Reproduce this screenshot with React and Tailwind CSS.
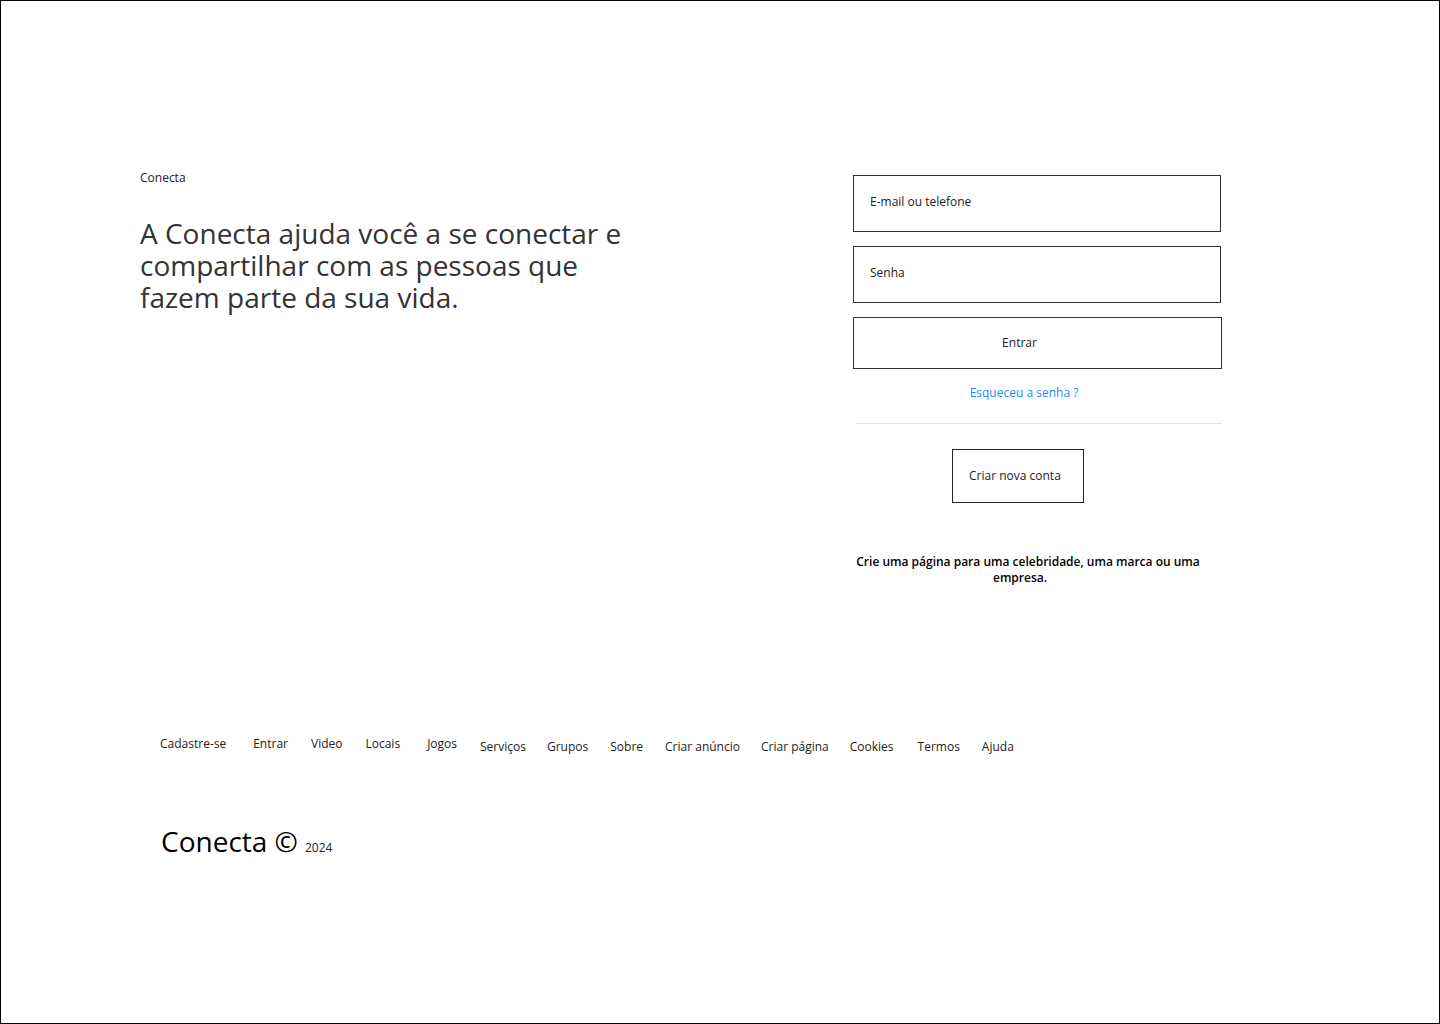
const footerLinks = [
  { label: "Cadastre-se", cls: "" },
  { label: "Entrar", cls: "ml-[27px]" },
  { label: "Video", cls: "ml-[23px]" },
  { label: "Locais", cls: "ml-[23px]" },
  { label: "Jogos", cls: "ml-[27px]" },
];

const footerLinksLow = [
  { label: "Serviços", cls: "ml-[23px]" },
  { label: "Grupos", cls: "ml-[21px]" },
  { label: "Sobre", cls: "ml-[22px]" },
  { label: "Criar anúncio", cls: "ml-[22px]" },
  { label: "Criar página", cls: "ml-[21px]" },
  { label: "Cookies", cls: "ml-[21px]" },
  { label: "Termos", cls: "ml-[24px]" },
  { label: "Ajuda", cls: "ml-[22px]" },
];

const App = () => {
  return (
    <div
      className="w-[1440px] h-[1024px] border border-black bg-white flex flex-col text-[#222]"
      style={{ fontFamily: '"Open Sans", "Noto Sans", sans-serif' }}
    >
      <div className="flex items-start pt-[168px] pl-[139px]">
        {/* left side */}
        <div className="w-[713px] shrink-0 pt-px">
          <p className="text-xs leading-4">Conecta</p>
          <h1 className="mt-[31px] w-[500px] text-[28px] leading-[32px] text-[#333]">
            A Conecta ajuda você a se conectar e compartilhar com as pessoas que fazem parte da sua vida.
          </h1>
        </div>

        {/* login form */}
        <div className="w-[369px] shrink-0 mt-[6px] flex flex-col">
          <div className="w-[368px] h-[57px] border border-[#333] pl-4 pt-[18px] text-xs leading-4">
            E-mail ou telefone
          </div>
          <div className="w-[368px] h-[57px] mt-[14px] border border-[#333] pl-4 pt-[18px] text-xs leading-4">
            Senha
          </div>
          <button className="w-[369px] h-[52px] mt-[14px] border border-[#333] flex items-center justify-center pr-[36px] text-xs leading-4">
            Entrar
          </button>
          <a className="mt-[16px] pr-[27px] text-center text-xs leading-4 text-[#1c8cf5]">
            Esqueceu a senha ?
          </a>
          <div className="mt-[22px] ml-[3px] h-px bg-[#e3e3e3]" />
          <button className="mt-[25px] ml-[99px] w-[132px] h-[54px] border border-[#222] flex items-center pl-4 text-xs leading-4">
            Criar nova conta
          </button>
          <p className="mt-[51px] w-[350px] text-center text-xs leading-4 font-semibold text-black">
            Crie uma página para uma celebridade, uma marca ou uma
            <br />
            <span className="inline-block mr-[16px]">empresa.</span>
          </p>
        </div>
      </div>

      {/* footer links */}
      <div className="mt-[150px] pl-[159px] flex items-start text-xs leading-4">
        {footerLinks.map((l) => (
          <span key={l.label} className={l.cls}>
            {l.label}
          </span>
        ))}
        <div className="flex pt-[3px]">
          {footerLinksLow.map((l) => (
            <span key={l.label} className={l.cls}>
              {l.label}
            </span>
          ))}
        </div>
      </div>

      <div className="mt-[70px] pl-[160px] flex items-baseline gap-[7px] text-black">
        <span className="text-[28px] leading-[32px]">Conecta ©</span>
        <span className="text-xs text-[#222]">2024</span>
      </div>
    </div>
  );
};

export default App;
